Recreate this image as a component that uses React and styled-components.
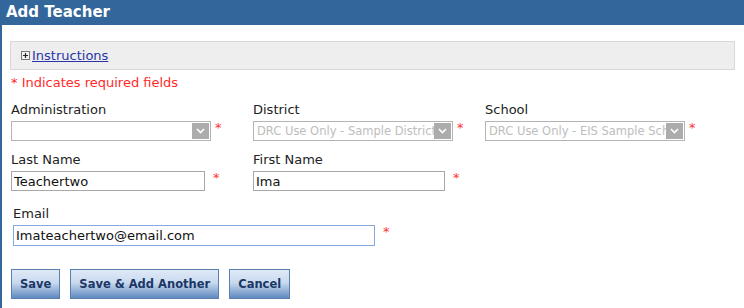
import styled, { createGlobalStyle } from 'styled-components'

const GlobalStyle = createGlobalStyle`
  html, body {
    margin: 0;
    padding: 0;
    background: #fff;
  }
  body {
    font-family: "DejaVu Sans", Verdana, sans-serif;
    font-size: 13px;
    color: #222;
  }
`

const PlusIcon = () => (
  <svg width="9" height="9" viewBox="0 0 9 9">
    <rect x="0.5" y="0.5" width="8" height="8" fill="#f4f4f4" stroke="#777" />
    <path d="M2 4.5h5M4.5 2v5" stroke="#222" strokeWidth="1.2" />
  </svg>
)

const Chevron = () => (
  <svg width="9" height="6" viewBox="0 0 9 6">
    <path d="M1 1l3.5 3.5L8 1" fill="none" stroke="#fff" strokeWidth="1.6" />
  </svg>
)

const Field = ({ label, width, gap = 8, offset = 0, children }) => (
  <FieldGroup $width={width} $offset={offset}>
    <Label>{label}</Label>
    <ControlRow $gap={gap}>
      {children}
      <Star>*</Star>
    </ControlRow>
  </FieldGroup>
)

const Select = ({ value, disabled }) => (
  <SelectBox $disabled={disabled}>
    <SelectText>{value}</SelectText>
    <Arrow><Chevron /></Arrow>
  </SelectBox>
)

const App = () => {
  return (
    <>
      <GlobalStyle />
      <Panel>
        <Header>Add Teacher</Header>
        <Body>
          <Instructions>
            <PlusIcon />
            <InstructionsLink href="#">Instructions</InstructionsLink>
          </Instructions>
          <Required>* Indicates required fields</Required>

          <Row>
            <Field label="Administration" width={242} gap={4}>
              <Select value="" />
            </Field>
            <Field label="District" width={232} gap={4}>
              <Select value="DRC Use Only - Sample District" disabled />
            </Field>
            <Field label="School" width={232} gap={4}>
              <Select value="DRC Use Only - EIS Sample School" disabled />
            </Field>
          </Row>

          <Row>
            <Field label="Last Name" width={242}>
              <TextInput $width={194} defaultValue="Teachertwo" />
            </Field>
            <Field label="First Name" width={232}>
              <TextInput $width={192} defaultValue="Ima" />
            </Field>
          </Row>

          <Row $top={15}>
            <Field label="Email" width={400} offset={2}>
              <TextInput $width={362} $height={21} $focused defaultValue="Imateachertwo@email.com" />
            </Field>
          </Row>

          <Buttons>
            <Button>Save</Button>
            <Button>Save &amp; Add Another</Button>
            <Button>Cancel</Button>
          </Buttons>
        </Body>
      </Panel>
    </>
  )
}

const Panel = styled.div`
  border-left: 2px solid #33669a;
  min-height: 308px;
  box-sizing: border-box;
`

const Header = styled.div`
  height: 25px;
  line-height: 24px;
  margin-left: -2px;
  padding-left: 6px;
  background: #33669a;
  color: #fff;
  font-size: 15px;
  font-weight: bold;
`

const Body = styled.div`
  padding: 16px 9px 0 8px;
`

const Instructions = styled.div`
  display: flex;
  align-items: center;
  gap: 2px;
  height: 27px;
  padding-left: 10px;
  background: #eeeeee;
  border: 1px solid #d8d8d8;
`

const InstructionsLink = styled.a`
  color: #2a34a8;
  text-decoration: underline;
  font-size: 13px;
  line-height: 16px;
  margin-top: 1px;
`

const Required = styled.div`
  margin-top: 5px;
  padding-left: 1px;
  color: #ff2a2a;
  line-height: 16px;
`

const Row = styled.div`
  display: flex;
  margin-top: ${p => p.$top ?? 11}px;
`

const FieldGroup = styled.div`
  width: ${p => p.$width}px;
  padding-left: ${p => 1 + p.$offset}px;
  box-sizing: border-box;
`

const Label = styled.div`
  line-height: 16px;
  margin-bottom: 3px;
  color: #222;
`

const ControlRow = styled.div`
  display: flex;
  align-items: flex-start;
  gap: ${p => p.$gap}px;
`

const Star = styled.span`
  color: #ff3030;
  font-size: 13px;
  line-height: 14px;
`

const SelectBox = styled.div`
  display: flex;
  align-items: center;
  width: 200px;
  height: 20px;
  box-sizing: border-box;
  border: 1px solid #b4b4b4;
  background: #fff;
  padding: 0 1px 0 3px;
  color: ${p => (p.$disabled ? '#bdbdbd' : '#222')};
`

const SelectText = styled.span`
  flex: 1;
  overflow: hidden;
  white-space: nowrap;
  font-size: 11.5px;
  line-height: 16px;
`

const Arrow = styled.span`
  display: flex;
  align-items: center;
  justify-content: center;
  width: 17px;
  height: 16px;
  background: #acacac;
  flex: none;
`

const TextInput = styled.input`
  width: ${p => p.$width}px;
  height: ${p => p.$height ?? 20}px;
  box-sizing: border-box;
  margin: 0;
  padding: 0 2px;
  border: 1px solid ${p => (p.$focused ? '#86a9e0' : '#a8a8a8')};
  font-family: "DejaVu Sans", Verdana, sans-serif;
  font-size: 13px;
  color: #111;
  outline: none;
`

const Buttons = styled.div`
  display: flex;
  gap: 10px;
  margin-top: 23px;
  padding-left: 1px;
`

const Button = styled.button`
  height: 30px;
  padding: 0 8px;
  border: 1px solid #5a7fb0;
  background: linear-gradient(to bottom, #dfe9f6 0%, #c9daef 45%, #5f8abf 100%);
  color: #1b3766;
  font-family: "DejaVu Sans", Verdana, sans-serif;
  font-size: 11.5px;
  font-weight: bold;
  cursor: pointer;
`

export default App
